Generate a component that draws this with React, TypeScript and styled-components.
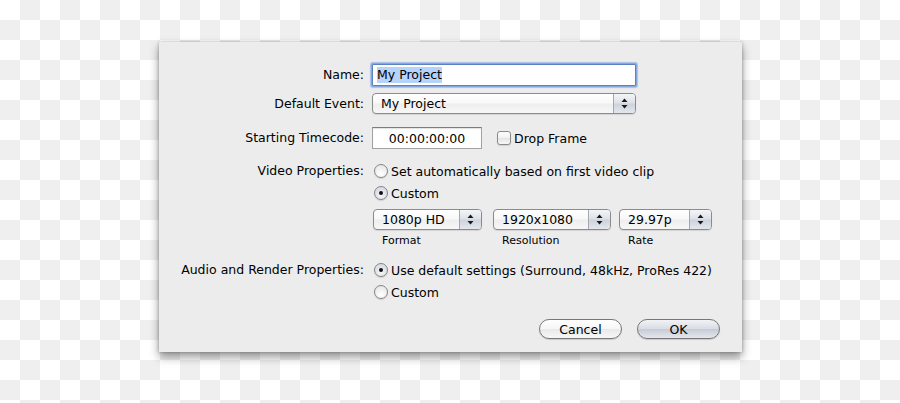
import React from 'react';
import styled, { createGlobalStyle } from 'styled-components';

const GlobalStyle = createGlobalStyle`
  html, body {
    margin: 0;
    padding: 0;
  }
  body {
    background: repeating-conic-gradient(#efefef 0 25%, #ffffff 0 50%) 0 0 / 40px 40px;
    font-family: 'DejaVu Sans', 'Liberation Sans', sans-serif;
    color: #000;
  }
`;

const Arrows = () => (
  <svg width="7" height="11" viewBox="0 0 7 11">
    <path d="M3.5 0.5 L6.5 4 L0.5 4 Z" fill="#1a1a1a" />
    <path d="M0.5 7 L6.5 7 L3.5 10.5 Z" fill="#1a1a1a" />
  </svg>
);

const PopUp = ({ width, value }: { width: number; value: string }) => (
  <PopUpBox $width={width}>
    <PopUpText>{value}</PopUpText>
    <PopUpArrows>
      <Arrows />
    </PopUpArrows>
  </PopUpBox>
);

const App = () => {
  return (
    <Page>
      <GlobalStyle />
      <Sheet>
        <Row $mt={0}>
          <Label>Name:</Label>
          <TextField $width={264} $focused>
            <Selected>My Project</Selected>
          </TextField>
        </Row>
        <Row $mt={7}>
          <Label>Default Event:</Label>
          <PopUp width={264} value="My Project" />
        </Row>
        <Row $mt={15}>
          <Label>Starting Timecode:</Label>
          <Inline>
            <TextField $width={110} $center>
              00:00:00:00
            </TextField>
            <Checkbox />
            <OptionText>Drop Frame</OptionText>
          </Inline>
        </Row>
        <Row $mt={15}>
          <Label>Video Properties:</Label>
          <Inline>
            <Radio />
            <OptionText>Set automatically based on first video clip</OptionText>
          </Inline>
        </Row>
        <Row $mt={4}>
          <span />
          <Inline>
            <Radio $checked />
            <OptionText>Custom</OptionText>
          </Inline>
        </Row>
        <Row $mt={7}>
          <span />
          <PopUpGroup>
            <PopUpColumn $ml={1}>
              <PopUp width={109} value="1080p HD" />
              <Caption>Format</Caption>
            </PopUpColumn>
            <PopUpColumn $ml={11}>
              <PopUp width={118} value="1920x1080" />
              <Caption>Resolution</Caption>
            </PopUpColumn>
            <PopUpColumn $ml={8}>
              <PopUp width={93} value="29.97p" />
              <Caption>Rate</Caption>
            </PopUpColumn>
          </PopUpGroup>
        </Row>
        <Row $mt={14}>
          <Label>Audio and Render Properties:</Label>
          <Inline>
            <Radio $checked />
            <OptionText>Use default settings (Surround, 48kHz, ProRes 422)</OptionText>
          </Inline>
        </Row>
        <Row $mt={4}>
          <span />
          <Inline>
            <Radio />
            <OptionText>Custom</OptionText>
          </Inline>
        </Row>
        <ButtonBar>
          <PushButton>Cancel</PushButton>
          <PushButton $default>OK</PushButton>
        </ButtonBar>
      </Sheet>
    </Page>
  );
};

const Page = styled.div`
  width: 900px;
  height: 403px;
  box-sizing: border-box;
  padding: 42px 0 0 159px;
  overflow: hidden;
  display: flex;
  align-items: flex-start;
`;

const Sheet = styled.div`
  width: 583px;
  height: 310px;
  box-sizing: border-box;
  padding: 22px 22px 0 20px;
  background: #ececec;
  display: flex;
  flex-direction: column;
  box-shadow: 0 5px 9px rgba(0, 0, 0, 0.4), 0 0 3px rgba(0, 0, 0, 0.25);
  font-size: 12.5px;
`;

const Row = styled.div<{ $mt: number }>`
  display: grid;
  grid-template-columns: 185px 1fr;
  column-gap: 8px;
  align-items: center;
  margin-top: ${({ $mt }) => $mt}px;
`;

const Label = styled.div`
  text-align: right;
  white-space: nowrap;
  line-height: 18px;
`;

const Inline = styled.div`
  display: flex;
  align-items: center;
  height: 18px;
`;

const TextField = styled.div<{ $width: number; $focused?: boolean; $center?: boolean }>`
  width: ${({ $width }) => $width}px;
  height: 22px;
  box-sizing: border-box;
  display: flex;
  align-items: center;
  justify-content: ${({ $center }) => ($center ? 'center' : 'flex-start')};
  padding: 0 4px;
  background: #fff;
  border: 1px solid ${({ $focused }) => ($focused ? '#5b82c2' : '#a2a2a2')};
  border-top-color: ${({ $focused }) => ($focused ? '#5b82c2' : '#7d7d7d')};
  box-shadow: ${({ $focused }) =>
    $focused
      ? '0 0 0 1px #86a8dd, 0 0 1px 2px #a9c2ea'
      : 'inset 0 1px 1px rgba(0, 0, 0, 0.12)'};
  border-radius: ${({ $focused }) => ($focused ? '1px' : '0')};
  white-space: nowrap;
`;

const Selected = styled.span`
  background: #b5d3fb;
  line-height: 16px;
`;

const Checkbox = styled.span`
  width: 14px;
  height: 14px;
  box-sizing: border-box;
  margin-left: 15px;
  border: 1px solid #8a8a8a;
  border-radius: 3px;
  background: linear-gradient(#fdfdfd, #f2f2f2 50%, #e4e4e4 52%, #f8f8f8);
  box-shadow: 0 1px 1px rgba(0, 0, 0, 0.12);
`;

const Radio = styled.span<{ $checked?: boolean }>`
  position: relative;
  width: 14px;
  height: 14px;
  box-sizing: border-box;
  margin-left: 2px;
  border: 1px solid #858585;
  border-radius: 50%;
  background: ${({ $checked }) =>
    $checked
      ? 'radial-gradient(circle at 50% 70%, #f4f6f9 0, #d9dde4 70%)'
      : 'radial-gradient(circle at 50% 75%, #ffffff 0, #e9e9e9 75%)'};
  box-shadow: 0 1px 1px rgba(0, 0, 0, 0.12);

  &::after {
    content: '';
    display: ${({ $checked }) => ($checked ? 'block' : 'none')};
    position: absolute;
    left: 4px;
    top: 4px;
    width: 4px;
    height: 4px;
    border-radius: 50%;
    background: #111;
  }
`;

const OptionText = styled.span`
  margin-left: 3px;
  white-space: nowrap;
`;

const PopUpBox = styled.div<{ $width: number }>`
  width: ${({ $width }) => $width}px;
  height: 21px;
  box-sizing: border-box;
  display: flex;
  border: 1px solid #8b8b8b;
  border-radius: 4px;
  overflow: hidden;
  background: linear-gradient(#ffffff 0%, #f8f8f8 48%, #eeeeee 52%, #f7f7f7 100%);
  box-shadow: 0 1px 1px rgba(0, 0, 0, 0.1);
`;

const PopUpText = styled.div`
  flex: 1;
  display: flex;
  align-items: center;
  padding-left: 8px;
  white-space: nowrap;
`;

const PopUpArrows = styled.div`
  width: 21px;
  display: flex;
  align-items: center;
  justify-content: center;
  border-left: 1px solid #a4a7ae;
  background: linear-gradient(#f3f5f8, #dde1e8 48%, #cdd3dc 52%, #e3e7ed);
`;

const PopUpGroup = styled.div`
  display: flex;
`;

const PopUpColumn = styled.div<{ $ml: number }>`
  display: flex;
  flex-direction: column;
  margin-left: ${({ $ml }) => $ml}px;
`;

const Caption = styled.div`
  margin-top: 4px;
  padding-left: 9px;
  font-size: 11px;
  line-height: 13px;
`;

const ButtonBar = styled.div`
  display: flex;
  justify-content: flex-end;
  gap: 15px;
  margin-top: 18px;
`;

const PushButton = styled.div<{ $default?: boolean }>`
  width: 83px;
  height: 20px;
  box-sizing: border-box;
  display: flex;
  align-items: center;
  justify-content: center;
  border: 1px solid #777;
  border-radius: 10px;
  background: ${({ $default }) =>
    $default
      ? 'linear-gradient(#f2f3f6, #d9dde4 48%, #c6ccd6 52%, #e4e7ec)'
      : 'linear-gradient(#ffffff, #f6f6f6 48%, #e9e9e9 52%, #f7f7f7)'};
  box-shadow: 0 1px 1px rgba(0, 0, 0, 0.15);
`;

export default App;
